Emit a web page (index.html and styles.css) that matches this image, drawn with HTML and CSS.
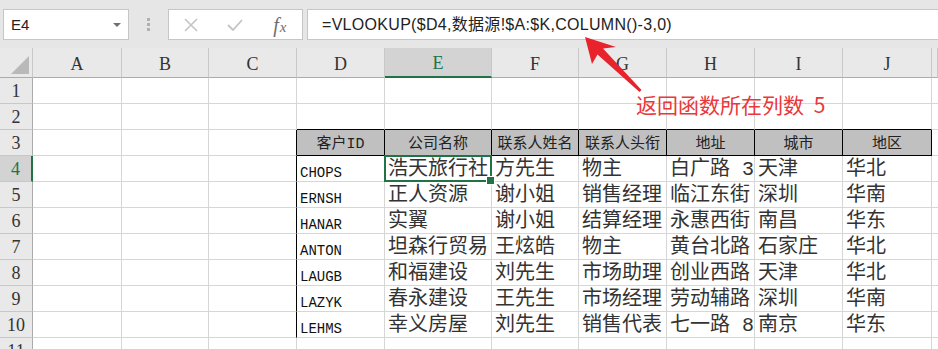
FILE: index.html
```html
<!DOCTYPE html>
<html lang="zh-CN">
<head>
    <meta charset="UTF-8">
    <title>VLOOKUP COLUMN</title>
    <link rel="stylesheet" href="styles.css">
</head>
<body>
<div class="app">
    <div class="fbar">
        <div class="namebox"><span>E4</span><span class="caret"></span></div>
        <div class="grip"><i></i><i></i><i></i></div>
        <div class="btns">
            <span class="slot">
                <svg width="14" height="14" viewBox="0 0 14 14"><path d="M1 1 L13 13 M13 1 L1 13" stroke="#c4c4c4" stroke-width="1.6" fill="none"/></svg>
            </span>
            <span class="slot">
                <svg width="16" height="12" viewBox="0 0 16 12"><path d="M1 6 L6 11 L15 1" stroke="#c4c4c4" stroke-width="1.8" fill="none"/></svg>
            </span>
            <span class="slot fx"><i>f</i><i class="x">x</i></span>
        </div>
        <div class="formula">=VLOOKUP($D4,数据源!$A:$K,COLUMN()-3,0)</div>
    </div>

    <div class="sheet">
        <div class="r hr">
            <div class="corner"><span class="tri"></span></div>
            <div class="ch">A</div><div class="ch">B</div><div class="ch">C</div><div class="ch">D</div>
            <div class="ch sel">E</div><div class="ch">F</div><div class="ch">G</div><div class="ch">H</div>
            <div class="ch">I</div><div class="ch">J</div><div class="ch"></div>
        </div>
        <div class="r">
            <div class="rh">1</div>
            <div class="c"></div><div class="c"></div><div class="c"></div><div class="c"></div><div class="c"></div><div class="c"></div>
            <div class="c"></div><div class="c"></div><div class="c"></div><div class="c"></div><div class="c"></div>
        </div>
        <div class="r">
            <div class="rh">2</div>
            <div class="c"></div><div class="c"></div><div class="c"></div>
            <div class="c tt"></div><div class="c tt"></div><div class="c tt"></div><div class="c tt"></div>
            <div class="c tt"></div><div class="c tt"></div><div class="c tt"></div><div class="c"></div>
        </div>
        <div class="r">
            <div class="rh">3</div>
            <div class="c"></div><div class="c"></div><div class="c lb"></div>
            <div class="c th">客户ID</div><div class="c th">公司名称</div><div class="c th">联系人姓名</div><div class="c th">联系人头衔</div>
            <div class="c th">地址</div><div class="c th">城市</div><div class="c th">地区</div><div class="c"></div>
        </div>
        <div class="r">
            <div class="rh on">4</div>
            <div class="c"></div><div class="c"></div><div class="c lb"></div>
            <div class="c d mono">CHOPS</div><div class="c d cur">浩天旅行社</div><div class="c d">方先生</div><div class="c d">物主</div>
            <div class="c d">白广路 314号</div><div class="c d">天津</div><div class="c d">华北</div><div class="c"></div>
        </div>
        <div class="r">
            <div class="rh">5</div>
            <div class="c"></div><div class="c"></div><div class="c lb"></div>
            <div class="c d mono">ERNSH</div><div class="c d">正人资源</div><div class="c d">谢小姐</div><div class="c d">销售经理</div>
            <div class="c d">临江东街</div><div class="c d">深圳</div><div class="c d">华南</div><div class="c"></div>
        </div>
        <div class="r">
            <div class="rh">6</div>
            <div class="c"></div><div class="c"></div><div class="c lb"></div>
            <div class="c d mono">HANAR</div><div class="c d">实翼</div><div class="c d">谢小姐</div><div class="c d">结算经理</div>
            <div class="c d">永惠西街</div><div class="c d">南昌</div><div class="c d">华东</div><div class="c"></div>
        </div>
        <div class="r">
            <div class="rh">7</div>
            <div class="c"></div><div class="c"></div><div class="c lb"></div>
            <div class="c d mono">ANTON</div><div class="c d">坦森行贸易</div><div class="c d">王炫皓</div><div class="c d">物主</div>
            <div class="c d">黄台北路</div><div class="c d">石家庄</div><div class="c d">华北</div><div class="c"></div>
        </div>
        <div class="r">
            <div class="rh">8</div>
            <div class="c"></div><div class="c"></div><div class="c lb"></div>
            <div class="c d mono">LAUGB</div><div class="c d">和福建设</div><div class="c d">刘先生</div><div class="c d">市场助理</div>
            <div class="c d">创业西路</div><div class="c d">天津</div><div class="c d">华北</div><div class="c"></div>
        </div>
        <div class="r">
            <div class="rh">9</div>
            <div class="c"></div><div class="c"></div><div class="c lb"></div>
            <div class="c d mono">LAZYK</div><div class="c d">春永建设</div><div class="c d">王先生</div><div class="c d">市场经理</div>
            <div class="c d">劳动辅路</div><div class="c d">深圳</div><div class="c d">华南</div><div class="c"></div>
        </div>
        <div class="r">
            <div class="rh">10</div>
            <div class="c"></div><div class="c"></div><div class="c lb"></div>
            <div class="c d mono">LEHMS</div><div class="c d">幸义房屋</div><div class="c d">刘先生</div><div class="c d">销售代表</div>
            <div class="c d">七一路 89号</div><div class="c d">南京</div><div class="c d">华东</div><div class="c"></div>
        </div>
        <div class="r">
            <div class="rh">11</div>
            <div class="c"></div><div class="c"></div><div class="c"></div><div class="c"></div><div class="c"></div><div class="c"></div>
            <div class="c"></div><div class="c"></div><div class="c"></div><div class="c"></div><div class="c"></div>
        </div>
    </div>

    <svg class="arrow" width="938" height="349" viewBox="0 0 938 349">
        <polygon points="585,37 616,47 603,48.5 641.5,90 639.5,92 597.5,54.5 592,64" fill="#e8232b"/>
    </svg>
    <div class="note">返回函数所在列数 5</div>
</div>
</body>
</html>
```

FILE: styles.css
```css
* {
    box-sizing: border-box;
}
html,
body {
    margin: 0;
    padding: 0;
    background: #fff;
    overflow: hidden;
}
.app {
    position: relative;
    width: 938px;
    height: 349px;
    font-family: "Liberation Sans", "Noto Sans CJK SC", sans-serif;
    color: #222;
}

/* formula bar */
.fbar {
    display: flex;
    align-items: flex-start;
    height: 48px;
    padding: 9px 0 0 3px;
    background: #e6e6e6;
}
.namebox {
    width: 126px;
    height: 31px;
    display: flex;
    align-items: center;
    justify-content: space-between;
    padding: 0 7px 0 7px;
    background: #fff;
    border: 1px solid #c6c6c6;
    font-size: 15px;
}
.caret {
    width: 0;
    height: 0;
    border-left: 4px solid transparent;
    border-right: 4px solid transparent;
    border-top: 4px solid #707070;
}
.grip {
    width: 39px;
    height: 31px;
    display: flex;
    flex-direction: column;
    align-items: center;
    justify-content: center;
    gap: 2px;
}
.grip i {
    width: 3px;
    height: 3px;
    background: #b0b0b0;
}
.btns {
    width: 135px;
    height: 31px;
    display: flex;
    background: #fff;
    border: 1px solid #c6c6c6;
}
.slot {
    flex: 1;
    display: flex;
    align-items: center;
    justify-content: center;
}
.fx {
    font-family: "Liberation Serif", serif;
    font-size: 20px;
    line-height: 20px;
    color: #6e6e6e;
}
.fx .x {
    font-size: 15px;
    margin-left: 1px;
    position: relative;
    top: 2px;
}
.formula {
    flex: 1;
    height: 31px;
    margin-left: 4px;
    padding-left: 14px;
    background: #fff;
    border: 1px solid #c6c6c6;
    border-right: none;
    font-size: 16px;
    letter-spacing: 0.3px;
    line-height: 30px;
    white-space: nowrap;
}

/* sheet */
.r {
    display: grid;
    grid-template-columns: 33px 89px 87px 88px 88px 107px 87px 88px 88px 88px 89px 1fr;
    height: 26px;
}
.hr {
    height: 30px;
}
.corner {
    display: flex;
    align-items: flex-end;
    justify-content: flex-end;
    padding: 0 3px 3px 0;
    background: #e9e9e9;
    border-right: 1px solid #c8c8c8;
    border-bottom: 1px solid #ababab;
}
.tri {
    width: 0;
    height: 0;
    border-left: 18px solid transparent;
    border-bottom: 18px solid #b9b9b9;
}
.ch {
    display: flex;
    align-items: flex-end;
    justify-content: center;
    padding-bottom: 2px;
    background: #e9e9e9;
    border-right: 1px solid #c8c8c8;
    border-bottom: 1px solid #ababab;
    font-family: "Liberation Serif", serif;
    font-size: 18px;
    color: #333;
}
.ch.sel {
    background: #d3d3d3;
    color: #217346;
    border-bottom: 2px solid #217346;
}
.rh {
    display: flex;
    align-items: center;
    justify-content: center;
    padding-top: 2px;
    background: #e9e9e9;
    border-right: 1px solid #ababab;
    border-bottom: 1px solid #c8c8c8;
    font-family: "Liberation Serif", serif;
    font-size: 18px;
    color: #333;
}
.rh.on {
    background: #d3d3d3;
    color: #217346;
    border-right: 2px solid #217346;
}
.c {
    display: flex;
    align-items: flex-end;
    padding: 0 3px;
    overflow: hidden;
    white-space: nowrap;
    border-right: 1px solid #d6d6d6;
    border-bottom: 1px solid #d6d6d6;
}
.c.tt {
    border-bottom-color: #000;
}
.c.lb {
    border-right-color: #000;
}
.th {
    justify-content: center;
    background: #c0c0c0;
    border-right-color: #000;
    border-bottom-color: #000;
    font-family: "Liberation Mono", "Noto Sans CJK SC", monospace;
    font-size: 15px;
    line-height: 20px;
    color: #222;
}
.d {
    font-family: "Liberation Mono", "Noto Sans CJK SC", monospace;
    font-size: 20px;
    line-height: 22px;
    color: #333;
}
.d.mono {
    font-size: 14px;
    line-height: 16px;
    color: #111;
}
.cur {
    position: relative;
    overflow: visible;
}
.cur::before {
    content: "";
    position: absolute;
    left: -1px;
    top: -1px;
    right: -1px;
    bottom: -1px;
    border: 2px solid #217346;
}
.cur::after {
    content: "";
    position: absolute;
    right: -4px;
    bottom: -4px;
    width: 7px;
    height: 7px;
    background: #217346;
    border: 1px solid #fff;
}

/* annotation */
.arrow {
    position: absolute;
    left: 0;
    top: 0;
    pointer-events: none;
}
.note {
    position: absolute;
    left: 636px;
    top: 92px;
    font-family: "Noto Sans CJK SC", sans-serif;
    font-size: 21px;
    line-height: 24px;
    word-spacing: 5px;
    color: #e8383d;
    white-space: nowrap;
}
```
